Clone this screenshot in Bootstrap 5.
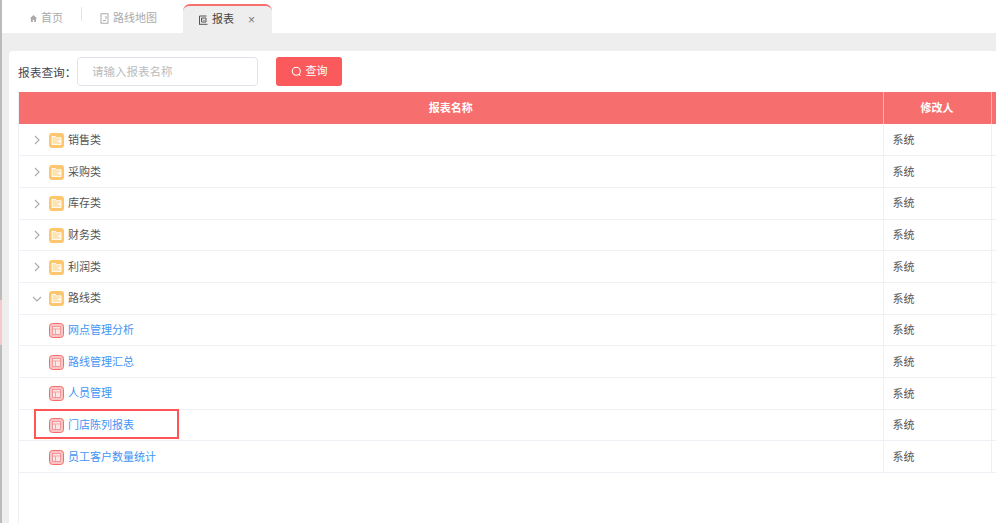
<!DOCTYPE html>
<html lang="zh">
<head>
<meta charset="utf-8">
<title>报表</title>
<link href="https://cdn.jsdelivr.net/npm/bootstrap@5.3.0/dist/css/bootstrap.min.css" rel="stylesheet">
<style>
html,body{height:100%;overflow:hidden}
body{width:996px;height:523px;background:#eee;font-family:"Liberation Sans","Noto Sans CJK SC",sans-serif;font-size:11px;color:#555}
.shell{height:523px}
.edge{width:2px;flex:none;background:linear-gradient(#bbb 0,#bbb 300px,#f3c9c9 300px,#f3c9c9 345px,#bbb 345px)}
.workspace{min-width:0}
.tabbar{height:33px;background:#fff;flex:none;padding-left:18px}
.tabitem{display:flex;align-items:center;gap:3px;height:29px;color:#aaa;font-size:11px;line-height:1}
.tab-home{width:63px;padding-left:9px;position:relative}
.tab-map{width:101px;padding-left:18px;gap:4px}
.tab-sep{width:1px;height:14px;background:#e4e4e4;flex:none;margin-top:7px;margin-left:-2px;margin-right:0}
.tab-on{width:89px;background:#eee;border-top:2px solid #f86f6f;border-radius:7px 7px 0 0;color:#444;padding-left:15px;height:29px;gap:4px}
.tab-on .tabclose{margin-left:10px;color:#777;font-size:12px}
.sheet{flex:1;margin:18px 0 0 7px;background:#fff;border-radius:4px 0 0 0;min-height:0;overflow:hidden}
.searchrow{height:41px;padding:6px 0 0 9px;gap:0}
.searchlabel{font-family:"Noto Sans CJK SC",sans-serif;font-size:11.700px;line-height:29px;color:#445;width:59px;flex:none;white-space:nowrap}
.searchinput{width:181px;height:29px;border:1px solid #e0e3ea;border-radius:4px;font-size:11.500px;padding:0 14px;box-shadow:none}
.searchinput::placeholder{color:#bbb}
.searchbtn{margin-left:18px;width:66px;height:29px;background:#fa5a5c;border:none;border-radius:3px;color:#fff;font-size:11px;padding:0;display:flex;align-items:center;justify-content:center;gap:4px}
.searchbtn:hover{background:#fa5a5c;color:#fff}
.gridwrap{margin-left:9px;width:1000px;height:440px;position:relative;border-left:1px solid #eef0f6}
.gridtable{table-layout:fixed;width:999px;margin:0;border-collapse:collapse;font-size:11px}
.gridtable th{background:#f76e6e;color:#fff;font-weight:700;text-align:center;height:32px;padding:0;border:0;border-right:1px solid #fab4b4;vertical-align:middle;font-size:11px}
.gridtable td{height:31.700px;padding:1px 0 0 9px;border:0;border-bottom:1px solid #eef0f6;border-right:1px solid #eef0f6;color:#555;vertical-align:middle}
.gridtable td:first-child{padding-left:13px}
.namecell{display:flex;align-items:center;gap:4px;line-height:1}
.caret{width:12px;flex:none;margin-right:1px}
.ico{flex:none}
.rpt{color:#3f94f4;text-decoration:none}
.mark-box{position:absolute;left:15px;top:317px;width:145px;height:30px;border:2px solid #f55;pointer-events:none}
</style>
</head>
<body>
<div class="shell d-flex">
  <div class="edge"></div>
  <div class="workspace flex-grow-1 d-flex flex-column">
    <div class="tabbar d-flex align-items-end">
      <div class="tabitem tab-home">
        <svg width="9" height="9" viewBox="0 0 10 10"><path d="M5 1 .8 5h1.400v4h2V6.400h1.600V9h2V5h1.400z" fill="#aaa"/></svg>首页
      </div>
      <div class="tab-sep align-self-start"></div>
      <div class="tabitem tab-map">
        <svg width="9" height="11" viewBox="0 0 9 11" fill="none" stroke="#aaa"><rect x="1" y=".8" width="7" height="9.400"/><path d="M3 7.500h3M6 3v3"/></svg>路线地图
      </div>
      <div class="tabitem tab-on">
        <svg width="10" height="10" viewBox="0 0 10 10" fill="none" stroke="#555"><path d="M1.500 9V1h7M1 9.300h8.500M3.500 3h4.500v4H3.500zM5 4.500l1.500 1.500"/></svg>
        报表<span class="tabclose">×</span>
      </div>
    </div>
    <div class="sheet">
      <div class="searchrow d-flex align-items-start">
        <label class="searchlabel mb-0" for="q">报表查询：</label>
        <input id="q" class="form-control searchinput" placeholder="请输入报表名称">
        <button class="btn searchbtn" type="button">
          <svg width="11" height="11" viewBox="0 0 11 11" fill="none" stroke="#fff" stroke-width="1.100"><circle cx="5.300" cy="5.200" r="4"/><path d="m7.800 8.200 1.500 1.500"/></svg>查询
        </button>
      </div>
      <div class="gridwrap">
        <table class="table gridtable">
          <colgroup><col style="width:864px"><col style="width:108px"><col></colgroup>
          <thead><tr><th>报表名称</th><th>修改人</th><th></th></tr></thead>
          <tbody id="rows"></tbody>
        </table>
        <div class="mark-box"></div>
      </div>
    </div>
  </div>
</div>
<script src="https://cdn.jsdelivr.net/npm/bootstrap@5.3.0/dist/js/bootstrap.bundle.min.js"></script>
<script>
const folder='<svg class="ico" width="15" height="15" viewBox="0 0 15 15"><rect width="15" height="15" rx="3" fill="#ffc76d"/><path d="M3 3.500h3.500l1 1.300H12v6.700H3z" fill="#ffe3b0" stroke="#fff" stroke-width=".9"/><rect x="9" y="7.500" width="3" height="1.500" fill="#fff"/></svg>';
const sheet='<svg class="ico" width="15" height="15" viewBox="0 0 15 15"><rect x=".5" y=".5" width="14" height="14" rx="3" fill="#fbc4c4" stroke="#f56c6c"/><rect x="3.500" y="3.500" width="8" height="8" fill="#fde6e6" stroke="#f28a8a" stroke-width=".8"/><path d="M3.500 6h8M6.500 6v5.500" stroke="#f28a8a" stroke-width=".7"/></svg>';
const right='<svg class="caret" width="12" height="12" viewBox="0 0 12 12" fill="none" stroke="#aaa" stroke-width="1.100"><path d="m3 2 4 4-4 4"/></svg>';
const down='<svg class="caret" width="12" height="12" viewBox="0 0 12 12" fill="none" stroke="#aaa" stroke-width="1.100"><path d="m1 4 4 4 4-4"/></svg>';
const gap='<span class="caret"></span>';
const data=[["销售类",0],["采购类",0],["库存类",0],["财务类",0],["利润类",0],["路线类",1],["网点管理分析",2],["路线管理汇总",2],["人员管理",2],["门店陈列报表",2],["员工客户数量统计",2]];
document.getElementById('rows').innerHTML=data.map(([n,t])=>{
  const inner=t===2?gap+sheet+'<a class="rpt" href="#">'+n+'</a>':(t===1?down:right)+folder+'<span>'+n+'</span>';
  return '<tr><td><div class="namecell">'+inner+'</div></td><td>系统</td><td></td></tr>';
}).join('');
</script>
</body>
</html>
